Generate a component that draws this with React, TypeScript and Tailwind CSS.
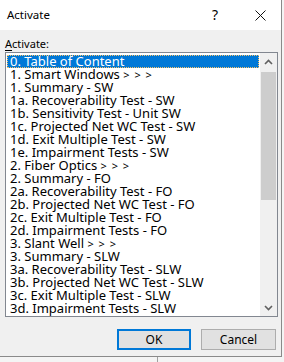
import React from "react";

const items = [
  "0. Table of Content",
  "1. Smart Windows >>>",
  "1. Summary - SW",
  "1a. Recoverability Test - SW",
  "1b. Sensitivity Test - Unit SW",
  "1c. Projected Net WC Test - SW",
  "1d. Exit Multiple Test - SW",
  "1e. Impairment Tests - SW",
  "2. Fiber Optics >>>",
  "2. Summary - FO",
  "2a. Recoverability Test - FO",
  "2b. Projected Net WC Test - FO",
  "2c. Exit Multiple Test - FO",
  "2d. Impairment Tests - FO",
  "3. Slant Well >>>",
  "3. Summary - SLW",
  "3a. Recoverability Test - SLW",
  "3b. Projected Net WC Test - SLW",
  "3c. Exit Multiple Test - SLW",
  "3d. Impairment Tests - SLW",
];

function Label({ text }: { text: string }) {
  // ">>>" is drawn spaced out in the original list
  const parts = text.split(">>>");
  if (parts.length === 1) return <>{text}</>;
  return (
    <>
      {parts[0]}
      <span className="text-[11px] tracking-[1px]">&gt; &gt; &gt;</span>
    </>
  );
}

export default function App() {
  return (
    <div
      className="w-[284px] h-[362px] bg-[#f4f4f4] relative overflow-hidden"
      style={{ fontFamily: '"Noto Sans", "Open Sans", sans-serif' }}
    >
      <div className="absolute left-[157px] top-[357px] w-px h-[5px] bg-[#a0a0a0]" />
      <div className="w-[282px] h-[357px] bg-[#f0f0f0] border-r border-b border-[#8a8a8a] flex flex-col">
        {/* title bar */}
        <div className="h-[30px] bg-white flex items-center pl-[7px] text-black">
          <span className="text-[11.5px]">Activate</span>
          <span className="ml-auto mr-[37px] text-[14px] leading-none">?</span>
          <svg width="11" height="11" viewBox="0 0 11 11" className="mr-[15px]">
            <path d="M0.5 0.5 L10.5 10.5 M10.5 0.5 L0.5 10.5" stroke="#111" strokeWidth="1" />
          </svg>
        </div>

        <div className="px-[5px] flex flex-col">
          <div className="mt-[7px] h-[14px] leading-[14px] text-[11px] text-black">
            <span className="underline underline-offset-[2px]">A</span>ctivate:
          </div>

          {/* list box */}
          <div className="mt-[1px] w-[273px] h-[265px] bg-white border border-[#828790] flex">
            <div className="flex-1 pt-[2px] px-[1px] overflow-hidden">
              {items.map((it, i) => (
                <div
                  key={i}
                  className={
                    i === 0
                      ? "h-[13px] leading-[11px] pl-[2px] text-[13px] whitespace-nowrap bg-[#0078d7] text-white border border-dotted border-[#f5c26b]"
                      : "h-[13px] leading-[13px] pl-[3px] text-[13px] whitespace-nowrap text-black"
                  }
                >
                  <Label text={it} />
                </div>
              ))}
            </div>
            <div className="w-[17px] bg-[#f0f0f0] flex flex-col items-center">
              <div className="h-[17px] w-full flex items-center justify-center">
                <svg width="9" height="6" viewBox="0 0 9 6">
                  <path d="M1 5 L4.5 1.5 L8 5" fill="none" stroke="#606060" strokeWidth="1.6" />
                </svg>
              </div>
              <div className="mt-[2px] h-[128px] w-[15px] bg-[#cdcdcd]" />
              <div className="mt-auto h-[17px] w-full flex items-center justify-center">
                <svg width="9" height="6" viewBox="0 0 9 6">
                  <path d="M1 1 L4.5 4.5 L8 1" fill="none" stroke="#606060" strokeWidth="1.6" />
                </svg>
              </div>
            </div>
          </div>

          {/* buttons */}
          <div className="mt-[12px] flex justify-end gap-[10px]">
            <button className="w-[74px] h-[21px] bg-[#e1e1e1] border-2 border-[#0078d7] text-[12px] text-black leading-none">
              OK
            </button>
            <button className="w-[75px] h-[21px] bg-[#e1e1e1] border border-[#adadad] text-[12px] text-black leading-none">
              Cancel
            </button>
          </div>
        </div>
      </div>
    </div>
  );
}
